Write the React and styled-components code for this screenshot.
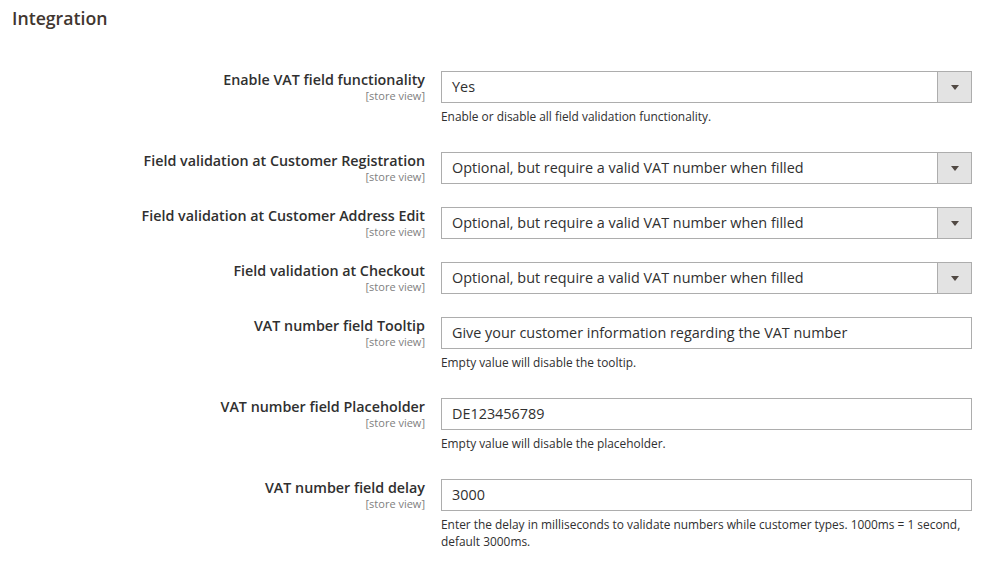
import React from "react";
import styled, { createGlobalStyle } from "styled-components";

const GlobalStyle = createGlobalStyle`
  html, body {
    margin: 0;
    padding: 0;
    background: #ffffff;
  }
  body {
    font-family: "Open Sans", "Liberation Sans", sans-serif;
    color: #303030;
  }
`;

const fields = [
  {
    label: "Enable VAT field functionality",
    type: "select",
    value: "Yes",
    note: "Enable or disable all field validation functionality.",
  },
  {
    label: "Field validation at Customer Registration",
    type: "select",
    value: "Optional, but require a valid VAT number when filled",
  },
  {
    label: "Field validation at Customer Address Edit",
    type: "select",
    value: "Optional, but require a valid VAT number when filled",
  },
  {
    label: "Field validation at Checkout",
    type: "select",
    value: "Optional, but require a valid VAT number when filled",
  },
  {
    label: "VAT number field Tooltip",
    type: "text",
    value: "Give your customer information regarding the VAT number",
    note: "Empty value will disable the tooltip.",
  },
  {
    label: "VAT number field Placeholder",
    type: "text",
    value: "DE123456789",
    note: "Empty value will disable the placeholder.",
  },
  {
    label: "VAT number field delay",
    type: "text",
    value: "3000",
    note: "Enter the delay in milliseconds to validate numbers while customer types. 1000ms = 1 second, default 3000ms.",
  },
];

const App = () => {
  return (
    <>
      <GlobalStyle />
      <Page>
        <Title>Integration</Title>
        <Fieldset>
          {fields.map((f) => (
            <Row key={f.label}>
              <LabelCell>
                <LabelText>{f.label}</LabelText>
                <Scope>[store view]</Scope>
              </LabelCell>
              <ValueCell>
                {f.type === "select" ? (
                  <SelectBox>
                    <SelectValue>{f.value}</SelectValue>
                    <ArrowBox>
                      <Arrow />
                    </ArrowBox>
                  </SelectBox>
                ) : (
                  <TextInput>{f.value}</TextInput>
                )}
                {f.note && <Note>{f.note}</Note>}
              </ValueCell>
            </Row>
          ))}
        </Fieldset>
      </Page>
    </>
  );
};

export default App;

const Page = styled.div`
  width: 991px;
  height: 562px;
  padding: 7px 19px 0 12px;
  box-sizing: border-box;
  overflow: hidden;
`;

const Title = styled.h2`
  margin: 0;
  font-size: 17.7px;
  line-height: 22px;
  font-weight: 600;
  color: #41362f;
`;

const Fieldset = styled.div`
  margin-top: 42px;
  display: flex;
  flex-direction: column;
  gap: 23px;
`;

const Row = styled.div`
  display: grid;
  grid-template-columns: 413px 531px;
  column-gap: 16px;
  align-items: start;
`;

const LabelCell = styled.div`
  display: flex;
  flex-direction: column;
  align-items: flex-end;
  text-align: right;
  padding-top: 1px;
`;

const LabelText = styled.span`
  display: block;
  font-size: 14.3px;
  line-height: 16px;
  font-weight: 600;
  color: #303030;
  white-space: nowrap;
`;

const Scope = styled.span`
  display: block;
  margin-top: 2px;
  font-size: 11px;
  line-height: 12px;
  color: #808080;
`;

const ValueCell = styled.div`
  display: flex;
  flex-direction: column;
`;

const SelectBox = styled.div`
  display: flex;
  height: 32px;
  border: 1px solid #adadad;
  box-sizing: border-box;
  background: #ffffff;
`;

const SelectValue = styled.div`
  flex: 1;
  padding: 0 10px;
  font-size: 14.4px;
  line-height: 30px;
  color: #303030;
  white-space: nowrap;
`;

const ArrowBox = styled.div`
  width: 33px;
  border-left: 1px solid #adadad;
  background: #e3e3e3;
  display: flex;
  align-items: center;
  justify-content: center;
`;

const Arrow = styled.span`
  width: 0;
  height: 0;
  border-left: 4px solid transparent;
  border-right: 4px solid transparent;
  border-top: 5px solid #514943;
`;

const TextInput = styled.div`
  height: 32px;
  border: 1px solid #adadad;
  box-sizing: border-box;
  padding: 0 10px;
  font-size: 14.4px;
  line-height: 30px;
  color: #303030;
  white-space: nowrap;
`;

const Note = styled.div`
  margin: 5px 0 4px;
  font-size: 11.9px;
  line-height: 17px;
  color: #303030;
`;
